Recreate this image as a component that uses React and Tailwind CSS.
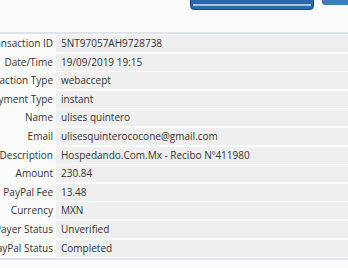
const rows = [
  ['Transaction ID', '5NT97057AH9728738'],
  ['Date/Time', '19/09/2019 19:15'],
  ['Transaction Type', 'webaccept'],
  ['Payment Type', 'instant'],
  ['Name', 'ulises quintero'],
  ['Email', 'ulisesquinterococone@gmail.com'],
  ['Description', 'Hospedando.Com.Mx - Recibo Nº411980'],
  ['Amount', '230.84'],
  ['PayPal Fee', '13.48'],
  ['Currency', 'MXN'],
  ['Payer Status', 'Unverified'],
  ['PayPal Status', 'Completed'],
];

export default function App() {
  return (
    <div
      className="h-[268px] w-[348px] overflow-hidden bg-[#fbfbfb] text-[10px] text-[#333]"
      style={{ fontFamily: '"Open Sans", sans-serif' }}
    >
      {/* top buttons, cut off by the viewport */}
      <div className="flex h-[32px] items-start">
        <div className="ml-[190px] mt-[-10px] h-[20px] w-[124px] rounded-b-[4px] border border-[#1c4f8a] bg-[#2c69ab] px-[2px] pt-[13px]">
          <div className="h-[2px] bg-[#a9c3df]" />
        </div>
        <div className="ml-[8px] mt-[-10px] h-[15px] flex-1 rounded-bl-[3px] bg-[#3f7bbb]" />
      </div>

      <div className="ml-[-30px] border-y-2 border-[#dfe4ea]">
        <div className="flex flex-col gap-[1.6px] py-[1px]">
          {rows.map(([label, value]) => (
            <div key={label} className="flex h-[17px] items-center">
              <div className="w-[83px] shrink-0 whitespace-nowrap text-right">{label}</div>
              <div className="ml-[3px] flex h-full flex-1 items-center bg-[#efefef] pl-[5px]">{value}</div>
            </div>
          ))}
        </div>
      </div>
    </div>
  );
}
